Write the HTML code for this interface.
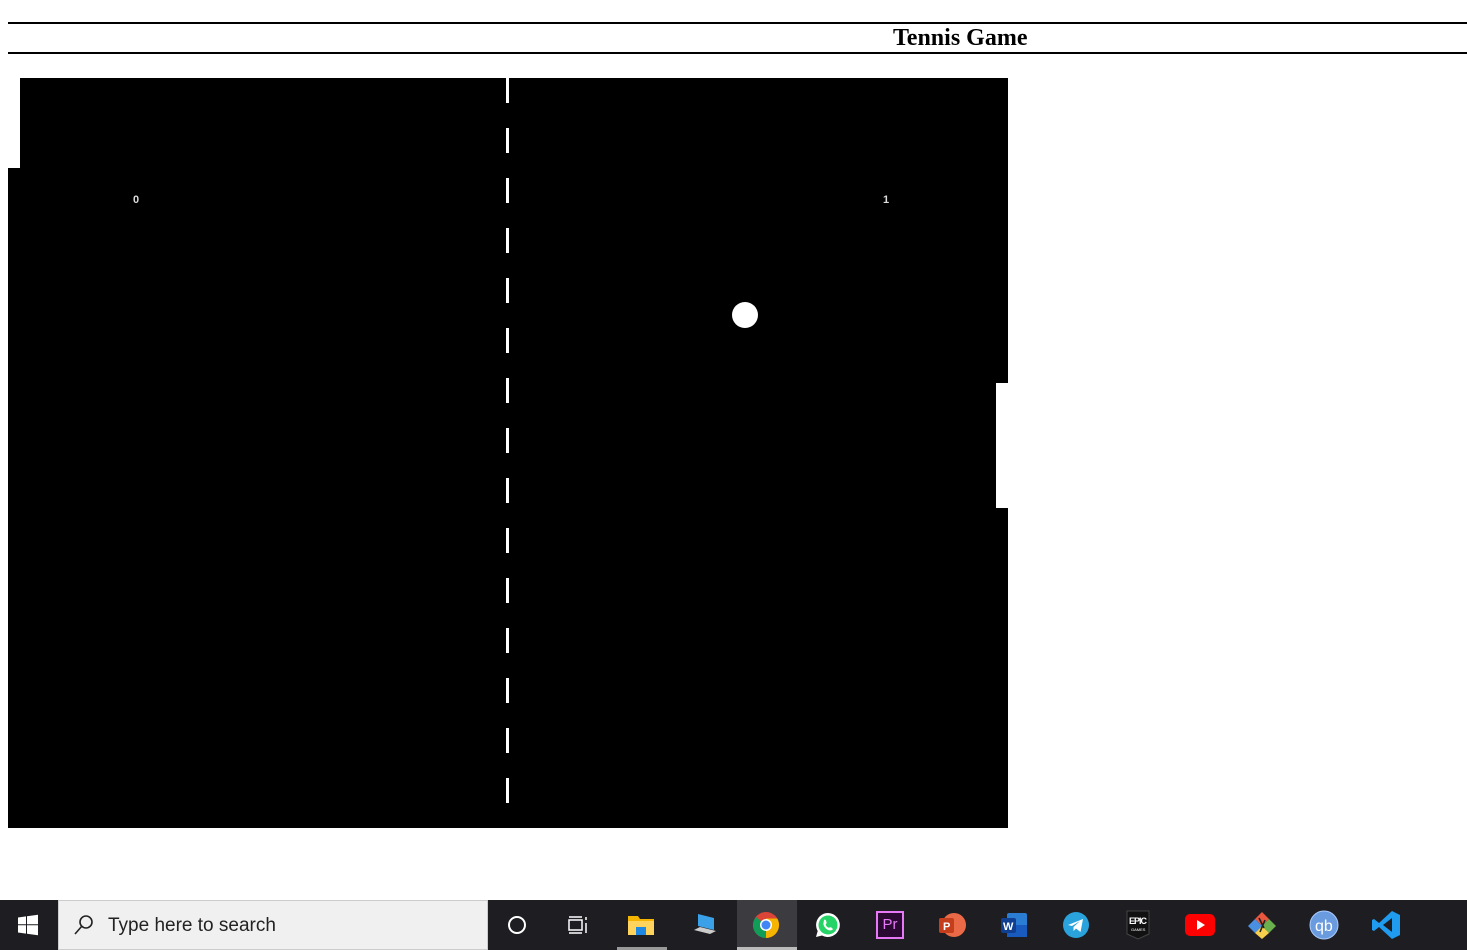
<!DOCTYPE html>
<html><head><meta charset="utf-8"><style>
*{margin:0;padding:0;box-sizing:border-box}
body{width:1467px;height:950px;background:#fff;position:relative;overflow:hidden;font-family:"Liberation Sans",sans-serif}
.abs{position:absolute}
.hr{left:8px;right:0;height:2px;background:#000}
.title{top:26px;font:bold 24px/24px "Liberation Serif",serif;text-align:left}
.dash{left:506px;width:3px;height:25px;background:#fff}
.score{color:#ddd;font:bold 11px "Liberation Sans",sans-serif}
.tb{left:0;top:900px;width:1467px;height:50px;background:#1e1d22}
.ic{position:absolute;top:0;width:50px;height:50px;display:flex;align-items:center;justify-content:center}
</style></head><body>
<div class="abs hr" style="top:22px"></div>
<div class="abs title" style="left:893px">Tennis Game</div>
<div class="abs hr" style="top:52px"></div>

<div class="abs" style="left:8px;top:78px;width:1000px;height:750px;background:#000"></div>
<div class="abs" style="left:8px;top:78px;width:12px;height:90px;background:#fff"></div>
<div class="abs" style="left:996px;top:383px;width:12px;height:125px;background:#fff"></div>
<div id="d"></div>
<div class="abs" style="left:732px;top:302px;width:26px;height:26px;border-radius:50%;background:#fff"></div>
<div class="abs score" style="left:133px;top:192px">0</div>
<div class="abs score" style="left:883px;top:192px">1</div>

<div class="abs tb">
 <div class="ic" style="left:3px"><svg width="22" height="22" viewBox="0 0 22 22" fill="#fff"><path d="M1 3.5L9 2.4V10.3H1zM10 2.2L21 .7V10.3H10zM1 11.3H9V19.6L1 18.5zM10 11.3H21V21.3L10 19.8z"/></svg></div>
 <div class="abs" style="left:58px;top:0;width:430px;height:50px;background:#f0f0f0;border:1px solid #ccc"></div>
 <svg class="abs" style="left:73px;top:14px" width="22" height="22" viewBox="0 0 22 22" fill="none" stroke="#222" stroke-width="1.6"><circle cx="13" cy="8" r="6"/><path d="M9 12L2 20"/></svg>
 <div class="abs" style="left:108px;top:15px;font-size:19px;color:#222">Type here to search</div>
 <div class="ic" style="left:492px"><div style="width:18px;height:18px;border:2.5px solid #fff;border-radius:50%"></div></div>
 <div class="ic" style="left:553px"><svg width="22" height="20" viewBox="0 0 22 20" fill="none" stroke="#fff" stroke-width="1.5"><rect x="2" y="5" width="13" height="10"/><path d="M2 2H15M2 18H15M19 2V5M19 8V18"/></svg></div>
 <div class="abs" style="left:617px;top:47px;width:50px;height:3px;background:#999"></div>
 <div class="ic" style="left:616px"><svg width="28" height="24" viewBox="0 0 28 24"><path d="M1 3H11L13 6H27V22H1z" fill="#f4b400"/><rect x="1" y="8" width="26" height="14" fill="#ffd35c"/><rect x="9" y="14" width="10" height="8" fill="#1e88e5"/></svg></div>
 <div class="ic" style="left:679px"><svg width="28" height="26" viewBox="0 0 28 26"><path d="M8 2L24 6V18L8 14z" fill="#3aa0e8"/><path d="M4 18L20 22L26 19L10 15z" fill="#ccc"/></svg></div>
 <div class="abs" style="left:737px;top:0;width:60px;height:50px;background:#3c3b40"></div>
 <div class="abs" style="left:737px;top:47px;width:60px;height:3px;background:#bbb"></div>
 <div class="ic" style="left:741px"><svg width="28" height="28" viewBox="0 0 28 28"><circle cx="14" cy="14" r="13" fill="#db4437"/><path d="M14 14L2.7 20.5A13 13 0 0 0 14 27z" fill="#0f9d58"/><path d="M14 14L14 27A13 13 0 0 0 25.3 7.5L14 7.5z" fill="#f4b400"/><path d="M14 14L2.7 20.5A13 13 0 0 1 1 14 13 13 0 0 1 4 6z" fill="#0f9d58"/><circle cx="14" cy="14" r="6" fill="#fff"/><circle cx="14" cy="14" r="4.5" fill="#4285f4"/></svg></div>
 <div class="ic" style="left:803px"><svg width="28" height="28" viewBox="0 0 28 28"><path d="M14 2A12 12 0 1 1 8 24.5L2 26L3.7 20A12 12 0 0 1 14 2z" fill="#fff"/><circle cx="14" cy="14" r="9.5" fill="#25d366"/><path d="M10 9C11 8 12 9 12.5 11S11 13 12 14.5 14 17 15.5 16.5 17 16 18.5 17.5 16 20 14 19 9 15 9.5 12z" fill="#fff"/></svg></div>
 <div class="ic" style="left:865px"><div style="width:28px;height:28px;background:#2a0a33;border:2px solid #e779f8;color:#e779f8;font-size:15px;line-height:24px;text-align:center">Pr</div></div>
 <div class="ic" style="left:927px"><svg width="30" height="28" viewBox="0 0 30 28"><circle cx="17" cy="14" r="12" fill="#ea6a47"/><rect x="2" y="7" width="15" height="15" rx="2" fill="#c43e1c"/><text x="6" y="19" fill="#fff" font-size="11" font-weight="bold" font-family="Liberation Sans">P</text></svg></div>
 <div class="ic" style="left:989px"><svg width="30" height="28" viewBox="0 0 30 28"><rect x="8" y="2" width="20" height="24" rx="2" fill="#2b7cd3"/><rect x="8" y="14" width="20" height="12" fill="#185abd"/><rect x="2" y="7" width="15" height="15" rx="2" fill="#103f91"/><text x="4" y="19" fill="#fff" font-size="11" font-weight="bold" font-family="Liberation Sans">W</text></svg></div>
 <div class="ic" style="left:1051px"><svg width="28" height="28" viewBox="0 0 28 28"><circle cx="14" cy="14" r="13" fill="#2aa3dc"/><path d="M6 14L21 8L18.5 21L14 17.5L11.5 20V16L18 10L10 15z" fill="#fff"/></svg></div>
 <div class="ic" style="left:1113px"><svg width="24" height="30" viewBox="0 0 24 30"><path d="M1 1H23V24L12 29L1 24z" fill="#111" stroke="#444"/><text x="3" y="14" fill="#fff" font-size="9" font-weight="bold" font-family="Liberation Sans" textLength="18">EPIC</text><text x="5" y="21" fill="#fff" font-size="4" font-family="Liberation Sans">GAMES</text></svg></div>
 <div class="ic" style="left:1175px"><svg width="30" height="22" viewBox="0 0 30 22"><rect width="30" height="22" rx="5" fill="#f00"/><path d="M12 6L20 11L12 16z" fill="#fff"/></svg></div>
 <div class="ic" style="left:1237px"><svg width="30" height="30" viewBox="0 0 30 30"><path d="M15 2L22 9L15 16L8 9z" fill="#e9573f"/><path d="M22 9L29 16L22 23L15 16z" fill="#6ab04c"/><path d="M8 9L15 16L8 23L1 16z" fill="#4a90e2"/><path d="M15 16L22 23L15 29L8 23z" fill="#f6d04d"/><path d="M12 8L17 18M18 10L13 22" stroke="#222" stroke-width="1.6"/></svg></div>
 <div class="ic" style="left:1299px"><svg width="30" height="30" viewBox="0 0 30 30"><circle cx="15" cy="15" r="14" fill="#6a9bde" stroke="#aaccff"/><text x="6" y="21" fill="#fff" font-size="16" font-family="Liberation Sans">qb</text></svg></div>
 <div class="ic" style="left:1361px"><svg width="30" height="30" viewBox="0 0 30 30"><path d="M21 1L29 5V25L21 29L8 17L3 21L1 20V10L3 9L8 13z" fill="#1f9cf0"/><path d="M21 8L12 15L21 22z" fill="#1e1d22"/></svg></div>
</div>
<script>
var h='';for(var y=78;y<828;y+=50)h+='<div class="abs dash" style="top:'+y+'px"></div>';document.getElementById('d').innerHTML=h;
document.querySelectorAll('.score').forEach(function(e){e.style.top='194px'});
</script>
</body></html>
